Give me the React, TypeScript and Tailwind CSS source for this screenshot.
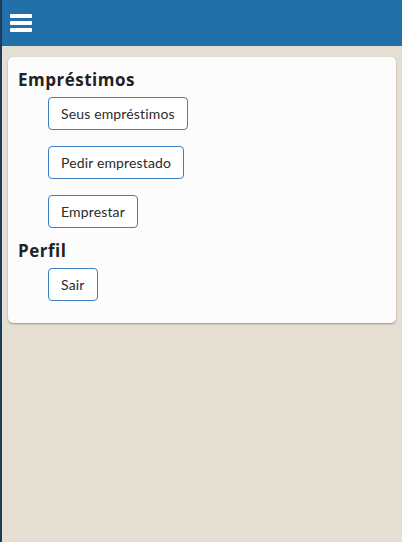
const emprestimos = ["Seus empréstimos", "Pedir emprestado", "Emprestar"];

function MenuButton({ label }: { label: string }) {
  return (
    <button className="h-[33px] rounded-[4px] border border-[#3b7fc1] bg-white px-3 text-[14px] tracking-[0.15px] text-[#2b2b2b]">
      {label}
    </button>
  );
}

function SectionTitle({ children }: { children: string }) {
  return (
    <h2
      className="text-[17px] font-bold leading-[24px] tracking-[0.5px] text-[#222]"
      style={{ fontFamily: "'Open Sans', Lato, sans-serif" }}
    >
      {children}
    </h2>
  );
}

export default function App() {
  return (
    <div
      className="flex h-[542px] w-[402px] overflow-hidden bg-[#e5dfd3]"
      style={{ fontFamily: "Lato, 'Open Sans', sans-serif" }}
    >
      <div className="w-[2px] shrink-0 bg-[#1d3c55]" />
      <div className="flex min-w-0 flex-1 flex-col">
        <header className="flex h-[46px] items-center bg-[#2170a9] pl-[8px]">
          <div className="flex flex-col gap-[3px]">
            <span className="block h-[4px] w-[22px] rounded-[1px] bg-white" />
            <span className="block h-[4px] w-[22px] rounded-[1px] bg-white" />
            <span className="block h-[4px] w-[22px] rounded-[1px] bg-white" />
          </div>
        </header>
        <main className="px-[6px] pt-[11px]">
          <div className="rounded-[5px] bg-[#fcfcfc] px-[10px] pb-[22px] pt-[11px] shadow-[0_1px_2px_rgba(0,0,0,0.35)]">
            <SectionTitle>Empréstimos</SectionTitle>
            <div className="mt-[5px] flex flex-col items-start gap-[16px] pl-[30px]">
              {emprestimos.map((label) => (
                <MenuButton key={label} label={label} />
              ))}
            </div>
            <div className="mt-[11px]">
              <SectionTitle>Perfil</SectionTitle>
            </div>
            <div className="mt-[5px] flex flex-col items-start pl-[30px]">
              <MenuButton label="Sair" />
            </div>
          </div>
        </main>
      </div>
    </div>
  );
}
